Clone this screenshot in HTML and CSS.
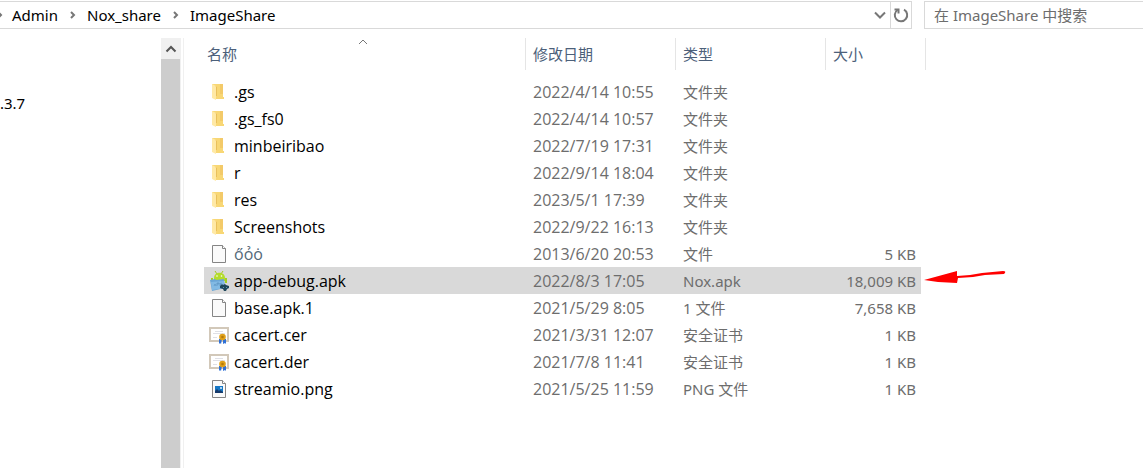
FILE: index.html
```html
<!DOCTYPE html>
<html lang="zh-CN">
<head>
<meta charset="utf-8">
<meta name="viewport" content="width=device-width, initial-scale=1">
<title>ImageShare</title>
<link rel="stylesheet" href="styles.css">
</head>
<body>
<svg class="defs" aria-hidden="true">
  <symbol id="folder" viewBox="0 0 20 20">
    <path d="M3 2h11v13h1v2H5z" fill="#f8d775"/>
    <path d="M11 2h3v10h-3z" fill="#f3ca69"/>
    <path d="M3 2l4 2v14l-4-2z" fill="#ffe9a6"/>
    <path d="M6 4l2 1v9H7V5z" fill="#e9c05c"/>
  </symbol>
  <symbol id="file" viewBox="0 0 20 20">
    <path d="M3.500 1.500h10l3 3v14h-13z" fill="#fafafa" stroke="#858585"/>
    <path d="M13.500 1.500v3h3" fill="#fff" stroke="#858585"/>
  </symbol>
  <symbol id="cert" viewBox="0 0 20 20">
    <rect x="1" y="3" width="18" height="13" fill="#fff" stroke="#d2c8b9" stroke-width="2"/>
    <path d="M6 6.500h8M4 8.500h12M4 12.500h4" stroke="#dfe0e6"/>
    <path d="M10 14h3l-1 5-1-1-1 1zM14 14h3v5l-1-1-2 1z" fill="#2f70d6"/>
    <circle cx="13.500" cy="12" r="3.300" fill="#dfa019"/>
    <circle cx="13.500" cy="12" r="1.300" fill="#b57a08"/>
  </symbol>
  <symbol id="image" viewBox="0 0 20 20">
    <path d="M3.500 1.500h10l3 3v14h-13z" fill="#fafafa" stroke="#858585"/>
    <path d="M13.500 1.500v3h3" fill="#fff" stroke="#858585"/>
    <rect x="6" y="7" width="8" height="7" fill="#1677c5"/>
    <path d="M6 12l2-2 2 2 1-1 3 2v1H6z" fill="#173b6c"/>
    <circle cx="12" cy="9" r="1" fill="#d9f1ff"/>
  </symbol>
  <symbol id="apk" viewBox="0 0 20 20">
    <path d="M6 0l2 3M14 0l-2 3" stroke="#a4c51b" stroke-width="1"/>
    <path d="M5 7c0-7 11-7 11 0v3H5z" fill="#b4dc2c"/>
    <path d="M2 7h2v4H2zM16 7h2v5h-2z" fill="#a5d020"/>
    <circle cx="8" cy="5" r=".8" fill="#fff"/><circle cx="12.500" cy="5" r=".8" fill="#fff"/>
    <path d="M1 9l5-1 1 1 8-1 1 9-13 3z" fill="#6ba6d6"/>
    <path d="M2 11l13-1 1 7-13 2z" fill="#82bae4"/>
    <path d="M5 15l1-2 1 2m1-3v3m0-3h2v1H8m3-1v3m2-3l-2 1 2 2" fill="none" stroke="#5d93c2" stroke-width=".7"/>
    <path d="M11 15l2-2 1 1 2-1 1 1 3 1v2l-2 1-1 2h-2l-1-2-3-1z" fill="#21485c"/>
    <path d="M14 16h1v1h-1zM17 16h1v1h-1z" fill="#5f9bb0"/>
  </symbol>
</svg>

<header class="toolbar">
  <nav class="address" aria-label="路径">
    <svg class="sep sep-first" viewBox="0 0 6 8"><path d="M1 1l3 3-3 3"/></svg>
    <a href="#">Admin</a>
    <svg class="sep" viewBox="0 0 6 8"><path d="M1 1l3 3-3 3"/></svg>
    <a href="#">Nox_share</a>
    <svg class="sep" viewBox="0 0 6 8"><path d="M1 1l3 3-3 3"/></svg>
    <a href="#">ImageShare</a>
    <button class="history" type="button" aria-label="以前的位置"><svg viewBox="0 0 12 8"><path d="M1 1.500l5 5 5-5"/></svg></button>
    <button class="refresh" type="button" aria-label="刷新"><svg viewBox="0 0 16 16"><path d="M4.500 3A6.200 6.200 0 1 0 11 2.700"/><path d="M1.500 2.500h4v4"/></svg></button>
  </nav>
  <input class="search" type="search" aria-label="搜索" placeholder="在 ImageShare 中搜索">
</header>

<div class="content">
  <aside class="tree"><span>.3.7</span></aside>
  <div class="scrollbar">
    <button type="button" aria-label="向上滚动"><svg viewBox="0 0 12 8"><path d="M1.500 6.500L6 2l4.500 4.500"/></svg></button>
    <div class="thumb"></div>
  </div>
  <main class="files">
    <table>
      <colgroup><col class="c-name"><col class="c-date"><col class="c-type"><col class="c-size"><col class="c-end"></colgroup>
      <thead>
        <tr>
          <th scope="col">名称<svg class="sort" viewBox="0 0 10 6"><path d="M1 5l4-4 4 4"/></svg></th>
          <th scope="col">修改日期</th><th scope="col">类型</th><th scope="col" colspan="2">大小</th>
        </tr>
      </thead>
      <tbody>
        <tr><td><div class="name"><svg><use href="#folder"/></svg>.gs</div></td><td class="date">2022/4/14 10:55</td><td>文件夹</td><td></td><td></td></tr>
        <tr><td><div class="name"><svg><use href="#folder"/></svg>.gs_fs0</div></td><td class="date">2022/4/14 10:57</td><td>文件夹</td><td></td><td></td></tr>
        <tr><td><div class="name"><svg><use href="#folder"/></svg>minbeiribao</div></td><td class="date">2022/7/19 17:31</td><td>文件夹</td><td></td><td></td></tr>
        <tr><td><div class="name"><svg><use href="#folder"/></svg>r</div></td><td class="date">2022/9/14 18:04</td><td>文件夹</td><td></td><td></td></tr>
        <tr><td><div class="name"><svg><use href="#folder"/></svg>res</div></td><td class="date">2023/5/1 17:39</td><td>文件夹</td><td></td><td></td></tr>
        <tr><td><div class="name"><svg><use href="#folder"/></svg>Screenshots</div></td><td class="date">2022/9/22 16:13</td><td>文件夹</td><td></td><td></td></tr>
        <tr><td><div class="name"><svg><use href="#file"/></svg><span class="marks">o&#x30B;o&#x309;o&#x307;</span></div></td><td class="date">2013/6/20 20:53</td><td>文件</td><td class="size">5 KB</td><td></td></tr>
        <tr class="selected"><td><div class="name"><svg><use href="#apk"/></svg>app-debug.apk</div></td><td class="date">2022/8/3 17:05</td><td>Nox.apk</td><td class="size">18,009 KB</td>
          <td class="end"><svg class="arrow" viewBox="0 0 84 16"><path d="M1 9L34 0v5l13-1 12-2 21-2q4 0 1 3l-19 1-12 2-15 1-1 5-19-1z" fill="#f00"/></svg></td></tr>
        <tr><td><div class="name"><svg><use href="#file"/></svg>base.apk.1</div></td><td class="date">2021/5/29 8:05</td><td>1 文件</td><td class="size">7,658 KB</td><td></td></tr>
        <tr><td><div class="name"><svg><use href="#cert"/></svg>cacert.cer</div></td><td class="date">2021/3/31 12:07</td><td>安全证书</td><td class="size">1 KB</td><td></td></tr>
        <tr><td><div class="name"><svg><use href="#cert"/></svg>cacert.der</div></td><td class="date">2021/7/8 11:41</td><td>安全证书</td><td class="size">1 KB</td><td></td></tr>
        <tr><td><div class="name"><svg><use href="#image"/></svg>streamio.png</div></td><td class="date">2021/5/25 11:59</td><td>PNG 文件</td><td class="size">1 KB</td><td></td></tr>
      </tbody>
    </table>
  </main>
</div>
</body>
</html>
```
FILE: styles.css
```css
* { box-sizing: border-box; }
body {
  margin: 0;
  min-height: 100vh;
  display: flex;
  flex-direction: column;
  overflow: hidden;
  background: #fff;
  color: #000;
  font: 15px/20px "Noto Sans", "Noto Sans CJK SC", sans-serif;
}
button { padding: 0; border: 0; background: none; display: flex; align-items: center; justify-content: center; }
svg { flex: none; }
.defs { position: absolute; width: 0; height: 0; }

.toolbar { display: flex; gap: 12px; padding-top: 1px; }
.address {
  flex: 1;
  display: flex;
  align-items: center;
  height: 28px;
  border: 1px solid #d9d9d9;
  border-left: 0;
}
.address a { color: #000; text-decoration: none; }
.sep { width: 6px; height: 8px; margin: 0 11px 0 12px; fill: none; stroke: #777; stroke-width: 2; }
.sep-first { margin: 0 9px 0 -3px; }
.history { width: 20px; height: 26px; margin-left: auto; }
.history svg { width: 12px; height: 8px; fill: none; stroke: #777; stroke-width: 2; }
.refresh { width: 22px; height: 26px; border-left: 1px solid #d9d9d9; border-right: 1px solid #d9d9d9; }
.address { border-right: 0; }
.refresh svg { width: 16px; height: 16px; fill: none; stroke: #777; stroke-width: 2; }
.search {
  width: 219px;
  height: 28px;
  padding: 0 9px;
  border: 1px solid #d9d9d9;
  border-right: 0;
  border-radius: 0;
  background: #fff;
  font: inherit;
  appearance: none;
}
.search::placeholder { color: #6d6d6d; opacity: 1; }

.content { flex: 1; display: flex; padding-top: 9px; }
.tree { width: 161px; padding-top: 55px; }
.scrollbar { width: 20px; display: flex; flex-direction: column; background: #f0f0f0; }
.scrollbar button { height: 21px; }
.scrollbar button svg { width: 12px; height: 8px; fill: none; stroke: #555; stroke-width: 2; }
.thumb { flex: 1; margin-right: 1px; background: #cdcdcd; }
.files { flex: 1; margin-left: 2px; padding-left: 20px; border-left: 1px solid #f0f0f0; }

table { width: 722px; table-layout: fixed; border-collapse: separate; border-spacing: 0; }
.c-name { width: 322px; }
.c-date, .c-type { width: 150px; }
.c-size { width: 95px; }
.c-end { width: 5px; }
th {
  position: relative;
  height: 32px;
  padding: 0 0 0 7px;
  border-right: 1px solid #e5e5e5;
  color: #4c607a;
  font-weight: 400;
  text-align: left;
}
th:first-child { padding-left: 3px; }
.sort { position: absolute; top: 1px; left: 50%; width: 10px; height: 6px; margin-left: -7px; fill: none; stroke: #777; }
tbody::before { content: ""; display: block; height: 8px; }
td { height: 27px; padding: 0 0 0 7px; color: #6d6d6d; white-space: nowrap; }
td:first-child { padding-left: 5px; color: #000; }
td:last-child { padding: 0; }
.name, .date { font-family: "Open Sans", "Noto Sans CJK SC", sans-serif; font-size: 16px; }
.name { display: flex; align-items: center; gap: 5px; }
.name svg { width: 20px; height: 20px; }
.marks { color: #536878; }
td.size { padding: 0 5px 0 0; text-align: right; }
.selected td:not(.end) { background: #d9d9d9; }
.end { position: relative; }
.arrow { position: absolute; left: 2px; top: 4px; width: 84px; height: 16px; }
```
